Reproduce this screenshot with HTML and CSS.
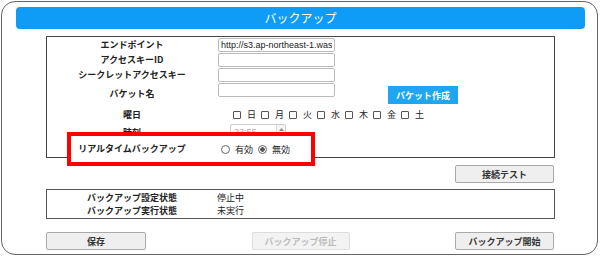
FILE: index.html
```html
<!DOCTYPE html>
<html lang="ja">

<head>
    <meta charset="UTF-8">
    <meta name="viewport" content="width=device-width, initial-scale=1.0">
    <title>バックアップ</title>
    <link rel="stylesheet" href="styles.css">
</head>

<body>
    <div class="frame">
        <div class="title-bar">バックアップ</div>

        <div class="content">
            <!-- Settings panel -->
            <div class="panel">
                <div class="row row-15">
                    <div class="label">エンドポイント</div>
                    <input class="text-input" type="text" value="http://s3.ap-northeast-1.wasabisys.com">
                </div>
                <div class="row row-15">
                    <div class="label">アクセスキーID</div>
                    <input class="text-input" type="text">
                </div>
                <div class="row row-15">
                    <div class="label">シークレットアクセスキー</div>
                    <input class="text-input" type="password">
                </div>
                <div class="row row-bucket">
                    <div class="label">バケット名</div>
                    <input class="text-input top" type="text">
                    <button class="blue-btn">バケット作成</button>
                </div>
                <div class="row row-days">
                    <div class="label">曜日</div>
                    <div class="days">
                        <label class="day"><span class="check"></span>日</label>
                        <label class="day"><span class="check"></span>月</label>
                        <label class="day"><span class="check"></span>火</label>
                        <label class="day"><span class="check"></span>水</label>
                        <label class="day"><span class="check"></span>木</label>
                        <label class="day"><span class="check"></span>金</label>
                        <label class="day"><span class="check"></span>土</label>
                    </div>
                </div>
                <div class="row row-time">
                    <div class="label">時刻</div>
                    <div class="time-box">
                        <span class="time-value">23:55</span>
                        <span class="spinner">
                            <svg width="5" height="3" viewBox="0 0 5 3"><path d="M0 3 L2.5 0 L5 3 Z" fill="#888"/></svg>
                            <svg width="5" height="3" viewBox="0 0 5 3"><path d="M0 0 L2.5 3 L5 0 Z" fill="#888"/></svg>
                        </span>
                    </div>
                </div>
                <!-- highlighted row -->
                <div class="row row-realtime">
                    <div class="label">リアルタイムバックアップ</div>
                    <div class="radios">
                        <span class="radio"></span><span class="radio-text">有効</span>
                        <span class="radio checked"></span><span class="radio-text">無効</span>
                    </div>
                </div>
            </div>

            <div class="test-row">
                <button class="gray-btn wide">接続テスト</button>
            </div>

            <!-- Status -->
            <div class="status-box">
                <div class="status-row">
                    <div class="label">バックアップ設定状態</div>
                    <div class="value">停止中</div>
                </div>
                <div class="status-row">
                    <div class="label">バックアップ実行状態</div>
                    <div class="value">未実行</div>
                </div>
            </div>

            <div class="button-group">
                <button class="gray-btn save">保存</button>
                <button class="gray-btn stop" disabled>バックアップ停止</button>
                <button class="gray-btn wide">バックアップ開始</button>
            </div>
        </div>
    </div>
</body>

</html>
```

FILE: styles.css
```css
body {
    margin: 0;
    background-color: white;
    font-family: "Noto Sans CJK JP", "Liberation Sans", sans-serif;
    color: #222;
}

.frame {
    margin: 1px 0 0 1px;
    width: 597px;
    height: 254px;
    box-sizing: border-box;
    border: 1px solid #666;
    border-radius: 14px;
}

.title-bar {
    margin: 5px 0 0 14px;
    width: 569px;
    height: 22px;
    line-height: 22px;
    background-color: #0e9cf6;
    border-radius: 4px;
    color: white;
    font-size: 12px;
    text-align: center;
}

.content {
    padding-left: 44px;
}

.panel {
    margin-top: 7px;
    width: 509px;
    height: 122px;
    box-sizing: border-box;
    border: 1px solid #444;
}

.row {
    display: flex;
    align-items: center;
}

.label {
    width: 170px;
    flex-shrink: 0;
    text-align: center;
    font-size: 9px;
    font-weight: bold;
    line-height: 12px;
}

.row-15 {
    height: 15px;
}

.text-input {
    margin-left: 1px;
    width: 117px;
    height: 14px;
    box-sizing: border-box;
    padding: 0 2px;
    border: 1px solid #bbb;
    border-radius: 2px;
    font-family: "Liberation Sans", sans-serif;
    font-size: 9px;
    color: #222;
}

.row-bucket {
    height: 24px;
}

.text-input.top {
    align-self: flex-start;
    margin-top: 1px;
}

.blue-btn {
    align-self: flex-start;
    margin: 4px 0 0 53px;
    width: 70px;
    height: 18px;
    padding: 0;
    border: none;
    background-color: #1fa5f2;
    color: white;
    font-family: inherit;
    font-size: 9px;
    font-weight: bold;
}

.row-days {
    height: 18px;
}

.days {
    display: flex;
    padding-left: 16px;
}

.day {
    display: flex;
    align-items: center;
    margin-right: 5px;
    font-size: 9px;
    line-height: 12px;
}

.check {
    width: 8px;
    height: 8px;
    box-sizing: border-box;
    border: 1px solid #555;
    border-radius: 1px;
    margin-right: 6px;
}

.row-time {
    height: 17px;
}

.time-box {
    align-self: flex-start;
    display: flex;
    margin-left: 13px;
    width: 56px;
    height: 16px;
    box-sizing: border-box;
    border: 1px solid #ccc;
    border-radius: 2px;
}

.time-value {
    flex: 1;
    padding-left: 3px;
    font-family: "Liberation Sans", sans-serif;
    font-size: 9px;
    line-height: 14px;
    color: #aaa;
}

.spinner {
    display: flex;
    flex-direction: column;
    justify-content: center;
    align-items: center;
    gap: 2px;
    width: 8px;
    border-left: 1px solid #ddd;
    background-color: #f4f4f4;
}

.row-realtime {
    height: 16px;
    position: relative;
    z-index: 0;
}

/* red highlight drawn over the row */
.row-realtime::before {
    content: "";
    position: absolute;
    left: 20px;
    top: -9px;
    width: 248px;
    height: 34px;
    box-sizing: border-box;
    border: 4px solid #f00;
    background-color: white;
    z-index: -1;
}

.radios {
    display: flex;
    align-items: center;
    margin-left: 4px;
    font-size: 9px;
}

.radio {
    width: 9px;
    height: 9px;
    box-sizing: border-box;
    border: 1px solid #666;
    border-radius: 50%;
    margin-right: 5px;
}

.radio.checked {
    background: radial-gradient(circle, #555 0, #555 2px, white 2.5px);
}

.radio-text {
    margin-right: 5px;
}

.test-row {
    display: flex;
    justify-content: flex-end;
    width: 508px;
    margin-top: 7px;
}

.gray-btn {
    height: 18px;
    padding: 0;
    border: 1px solid #aaa;
    border-radius: 2px;
    background-color: #efefef;
    color: #333;
    font-family: inherit;
    font-size: 9px;
    font-weight: bold;
}

.gray-btn.wide {
    width: 99px;
}

.gray-btn.save {
    width: 100px;
}

.gray-btn.stop {
    width: 98px;
    border-color: #ddd;
    background-color: #f3f3f3;
    color: #bbb;
}

.status-box {
    margin-top: 6px;
    width: 509px;
    height: 30px;
    box-sizing: border-box;
    padding-top: 1px;
    border: 1px solid #555;
}

.status-row {
    display: flex;
    align-items: center;
    height: 13px;
}

.value {
    font-size: 9px;
}

.button-group {
    display: flex;
    justify-content: space-between;
    width: 508px;
    margin-top: 13px;
}
```
